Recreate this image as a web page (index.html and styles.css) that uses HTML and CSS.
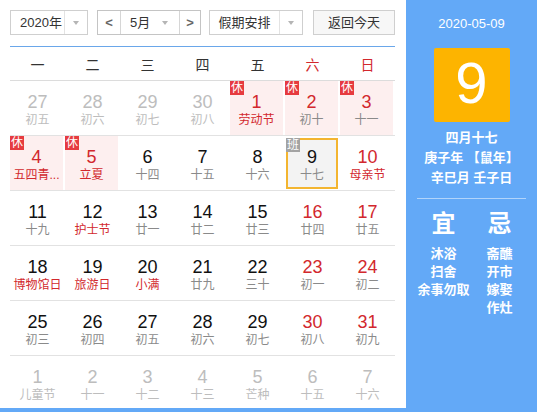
FILE: index.html
```html
<!DOCTYPE html>
<html lang="zh-CN">
<head>
<meta charset="utf-8">
<title>万年历</title>
<link rel="stylesheet" href="styles.css">
</head>
<body>
<div class="app">
  <div class="main">
    <div class="toolbar">
      <div class="sel year"><span class="txt">2020年</span><span class="arr"><i class="tri"></i></span></div>
      <div class="sel month"><span class="nav">&lt;</span><span class="mtxt">5月<i class="tri"></i></span><span class="nav">&gt;</span></div>
      <div class="sel hol-sel"><span class="txt">假期安排</span><span class="arr"><i class="tri"></i></span></div>
      <div class="btn">返回今天</div>
    </div>
    <div class="cal">
      <div class="week">
        <span>一</span><span>二</span><span>三</span><span>四</span><span>五</span><span class="we">六</span><span class="we">日</span>
      </div>
      <div class="row">
        <div class="cell other"><b>27</b><em>初五</em></div>
        <div class="cell other"><b>28</b><em>初六</em></div>
        <div class="cell other"><b>29</b><em>初七</em></div>
        <div class="cell other"><b>30</b><em>初八</em></div>
        <div class="cell hol"><span class="badge">休</span><b>1</b><em class="fest">劳动节</em></div>
        <div class="cell hol"><span class="badge">休</span><b>2</b><em>初十</em></div>
        <div class="cell hol"><span class="badge">休</span><b>3</b><em>十一</em></div>
      </div>
      <div class="row">
        <div class="cell hol"><span class="badge">休</span><b>4</b><em class="fest">五四青...</em></div>
        <div class="cell hol"><span class="badge">休</span><b>5</b><em class="fest">立夏</em></div>
        <div class="cell"><b>6</b><em>十四</em></div>
        <div class="cell"><b>7</b><em>十五</em></div>
        <div class="cell"><b>8</b><em>十六</em></div>
        <div class="cell today"><span class="badge work">班</span><b>9</b><em>十七</em></div>
        <div class="cell red"><b>10</b><em class="fest">母亲节</em></div>
      </div>
      <div class="row">
        <div class="cell"><b>11</b><em>十九</em></div>
        <div class="cell"><b>12</b><em class="fest">护士节</em></div>
        <div class="cell"><b>13</b><em>廿一</em></div>
        <div class="cell"><b>14</b><em>廿二</em></div>
        <div class="cell"><b>15</b><em>廿三</em></div>
        <div class="cell red"><b>16</b><em>廿四</em></div>
        <div class="cell red"><b>17</b><em>廿五</em></div>
      </div>
      <div class="row">
        <div class="cell"><b>18</b><em class="fest">博物馆日</em></div>
        <div class="cell"><b>19</b><em class="fest">旅游日</em></div>
        <div class="cell"><b>20</b><em class="fest">小满</em></div>
        <div class="cell"><b>21</b><em>廿九</em></div>
        <div class="cell"><b>22</b><em>三十</em></div>
        <div class="cell red"><b>23</b><em>初一</em></div>
        <div class="cell red"><b>24</b><em>初二</em></div>
      </div>
      <div class="row">
        <div class="cell"><b>25</b><em>初三</em></div>
        <div class="cell"><b>26</b><em>初四</em></div>
        <div class="cell"><b>27</b><em>初五</em></div>
        <div class="cell"><b>28</b><em>初六</em></div>
        <div class="cell"><b>29</b><em>初七</em></div>
        <div class="cell red"><b>30</b><em>初八</em></div>
        <div class="cell red"><b>31</b><em>初九</em></div>
      </div>
      <div class="row last">
        <div class="cell other"><b>1</b><em>儿童节</em></div>
        <div class="cell other"><b>2</b><em>十一</em></div>
        <div class="cell other"><b>3</b><em>十二</em></div>
        <div class="cell other"><b>4</b><em>十三</em></div>
        <div class="cell other"><b>5</b><em>芒种</em></div>
        <div class="cell other"><b>6</b><em>十五</em></div>
        <div class="cell other"><b>7</b><em>十六</em></div>
      </div>
    </div>
  </div>
  <aside class="side">
    <div class="date">2020-05-09</div>
    <div class="bigday">9</div>
    <div class="lunar">
      <div>四月十七</div>
      <div>庚子年 【鼠年】</div>
      <div>辛巳月 壬子日</div>
    </div>
    <div class="divider"></div>
    <div class="yiji">
      <div class="col">
        <div class="head">宜</div>
        <div>沐浴</div>
        <div>扫舍</div>
        <div>余事勿取</div>
      </div>
      <div class="col">
        <div class="head">忌</div>
        <div>斋醮</div>
        <div>开市</div>
        <div>嫁娶</div>
        <div>作灶</div>
      </div>
    </div>
  </aside>
</div>
</body>
</html>
```

FILE: styles.css
```css
html, body {
  margin: 0;
  padding: 0;
  background: #fff;
}
body {
  font-family: "Liberation Sans", "Noto Sans CJK SC", sans-serif;
  color: #333;
}
.app {
  display: flex;
  width: 537px;
  height: 412px;
  overflow: hidden;
}
.main {
  width: 406px;
  height: 412px;
  box-sizing: border-box;
  padding: 10px 11px 0 10px;
  border-bottom: 4px solid #63a9f7;
}
.toolbar {
  display: flex;
  height: 25px;
  font-size: 13px;
  color: #333;
}
.sel {
  display: flex;
  box-sizing: border-box;
  height: 25px;
  border: 1px solid #cfcfcf;
  background: #fff;
  line-height: 23px;
}
.sel .txt {
  flex: 1;
}
.sel .arr {
  width: 22px;
  border-left: 1px solid #e3e3e3;
  display: flex;
  align-items: center;
  justify-content: center;
}
.tri {
  display: inline-block;
  width: 0;
  height: 0;
  border-left: 3.5px solid transparent;
  border-right: 3.5px solid transparent;
  border-top: 4px solid #b5b5b5;
}
.year {
  width: 78px;
}
.year .txt {
  padding-left: 9px;
}
.month {
  width: 104px;
  margin-left: 9px;
  border-color: #c4c4c4;
}
.month .nav {
  width: 22px;
  text-align: center;
  color: #666;
  font-weight: bold;
  font-size: 13px;
}
.month .nav:first-child {
  border-right: 1px solid #d6d6d6;
}
.month .nav:last-child {
  width: 20px;
  border-left: 1px solid #d6d6d6;
}
.mtxt {
  flex: 1;
  display: flex;
  align-items: center;
  padding-left: 9px;
  gap: 12px;
}
.hol-sel {
  width: 94px;
  margin-left: 8px;
}
.hol-sel .txt {
  text-align: center;
}
.btn {
  width: 82px;
  margin-left: 10px;
  box-sizing: border-box;
  height: 25px;
  border: 1px solid #cfcfcf;
  background: #f7f7f7;
  text-align: center;
  line-height: 23px;
}
.cal {
  width: 385px;
  margin-top: 11px;
  border-top: 1px solid #6aa7ea;
}
.week {
  display: grid;
  grid-template-columns: repeat(7, 55px);
  height: 33px;
  border-bottom: 1px solid #dcdcdc;
  align-items: center;
  font-size: 14px;
  color: #333;
  text-align: center;
}
.week .we {
  color: #d2282d;
}
.row {
  display: grid;
  grid-template-columns: repeat(7, 55px);
  height: 54px;
  border-bottom: 1px solid #e2e2e2;
}
.row.last {
  height: 52px;
  border-bottom: 0;
}
.cell {
  position: relative;
  display: flex;
  flex-direction: column;
  align-items: center;
  padding-top: 11px;
  box-sizing: border-box;
}
.cell b {
  font-family: "Liberation Sans", sans-serif;
  font-weight: normal;
  font-size: 18px;
  line-height: 20px;
  color: #111;
}
.cell em {
  font-style: normal;
  font-size: 12px;
  line-height: 16px;
  color: #8a8a8a;
  white-space: nowrap;
}
.cell em.fest {
  color: #d2282d;
}
.cell.red b {
  color: #d2282d;
}
.cell.other b,
.cell.other em {
  color: #bdbdbd;
}
.cell.hol {
  background: #fdefef;
  margin-right: 2px;
}
.cell.hol b {
  color: #d2282d;
}
.badge {
  position: absolute;
  top: 0;
  left: 0;
  width: 14px;
  height: 14px;
  background: #e63b3f;
  color: #fff;
  font-size: 12px;
  line-height: 14px;
  text-align: center;
}
.badge.work {
  background: #a3a3a3;
  top: -2px;
  left: -2px;
}
.cell.today {
  margin: 2px 2px 1px 1px;
  border: 2px solid #f3b530;
  background: #f3f3f3;
  padding-top: 7px;
}
.side {
  width: 131px;
  height: 412px;
  background: #63a9f7;
  color: #fff;
  display: flex;
  flex-direction: column;
  align-items: center;
}
.date {
  margin-top: 16px;
  font-size: 13px;
  line-height: 16px;
}
.bigday {
  margin-top: 16px;
  width: 76px;
  height: 74px;
  background: #fdb400;
  border-radius: 2px;
  font-family: "Liberation Sans", sans-serif;
  font-size: 58px;
  line-height: 70px;
  text-align: center;
  color: #fff;
}
.lunar {
  margin-top: 6px;
  font-size: 13px;
  line-height: 20px;
  font-weight: bold;
  text-align: center;
}
.divider {
  margin-top: 10px;
  width: 109px;
  height: 1px;
  background: rgba(255, 255, 255, 0.5);
}
.yiji {
  margin-top: 10px;
  display: grid;
  grid-template-columns: 56px 56px;
  font-size: 13px;
  font-weight: bold;
  line-height: 18px;
  text-align: center;
}
.yiji .head {
  font-size: 24px;
  line-height: 30px;
  margin-bottom: 6px;
}
```
